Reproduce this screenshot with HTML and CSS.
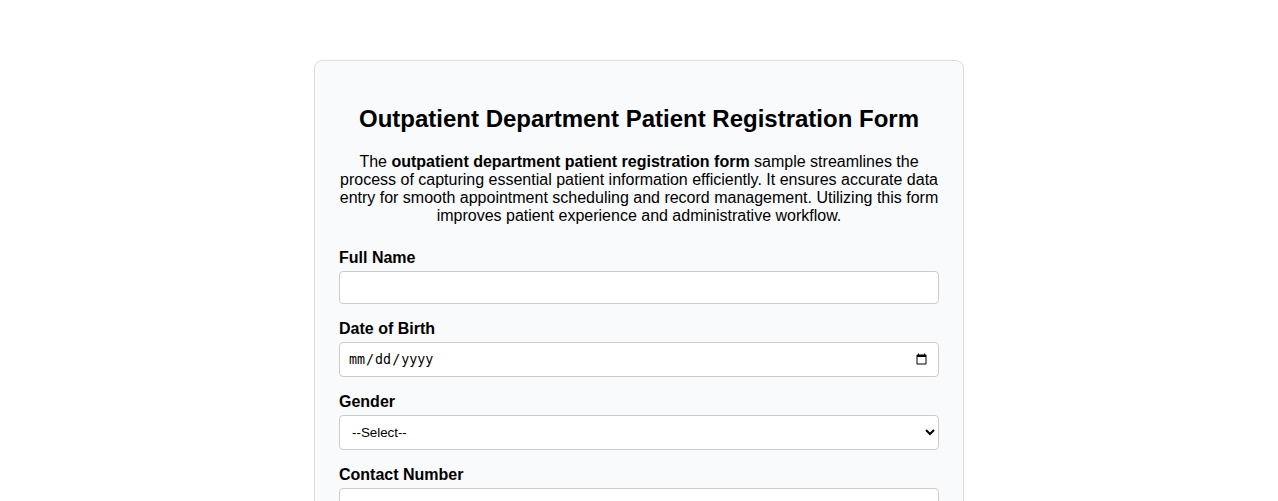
FILE: index.html
```html
<!DOCTYPE html>
<html lang="en">
<head>
    <meta charset="UTF-8">
    <meta name="viewport" content="width=device-width, initial-scale=1.0">
    <title>Outpatient Department Patient Registration Form</title>
    <link rel="stylesheet" href="styles.css">
</head>
<body>
    <div class="container">
        <h1>Outpatient Department Patient Registration Form</h1>
        <p class="intro">The <strong>outpatient department patient registration form</strong> sample streamlines the process of capturing essential patient information efficiently. It ensures accurate data entry for smooth appointment scheduling and record management. Utilizing this form improves patient experience and administrative workflow.</p>

        <form>
            <label for="fullName">Full Name</label>
            <input type="text" id="fullName" name="fullName">

            <label for="dob">Date of Birth</label>
            <input type="date" id="dob" name="dob">

            <label for="gender">Gender</label>
            <select id="gender" name="gender">
                <option value="">--Select--</option>
                <option value="male">Male</option>
                <option value="female">Female</option>
                <option value="other">Other</option>
            </select>

            <label for="contact">Contact Number</label>
            <input type="tel" id="contact" name="contact">

            <label for="email">Email Address</label>
            <input type="email" id="email" name="email">
        </form>
    </div>
</body>
</html>
```

FILE: styles.css
```css
body {
    font-family: "Liberation Sans", Arial, sans-serif;
    background-color: #fff;
    margin: 0;
    padding: 20px;
}

.container {
    max-width: 600px;
    margin: 40px auto;
    padding: 24px;
    background-color: #f9fafb;
    border: 1px solid #ddd;
    border-radius: 8px;
}

h1 {
    text-align: center;
    font-size: 24px;
    margin: 20px 0;
}

.intro {
    text-align: center;
    font-size: 16px;
    margin-bottom: 24px;
}

label {
    display: block;
    font-weight: bold;
    margin-bottom: 4px;
}

input,
select {
    width: 100%;
    box-sizing: border-box;
    padding: 8px;
    margin-bottom: 16px;
    border: 1px solid #ccc;
    border-radius: 4px;
    background-color: #fff;
}

select {
    height: 35px;
}
```
